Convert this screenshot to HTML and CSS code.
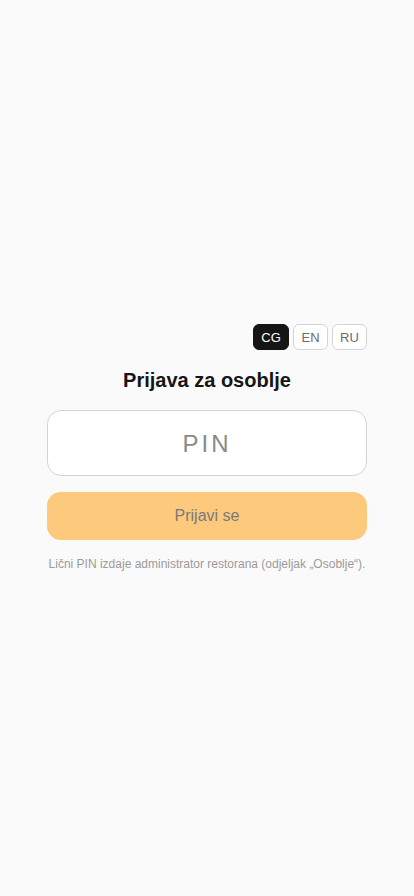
FILE: index.html
```html
<!DOCTYPE html>
<html lang="sr">
<head>
<meta charset="utf-8">
<meta name="viewport" content="width=device-width, initial-scale=1">
<title>Prijava za osoblje</title>
<link rel="stylesheet" href="styles.css">
</head>
<body>
<main class="page">
  <section class="card">
    <div class="langs">
      <button class="lang active">CG</button>
      <button class="lang">EN</button>
      <button class="lang">RU</button>
    </div>
    <h1 class="title">Prijava za osoblje</h1>
    <input class="pin" type="password" placeholder="PIN" inputmode="numeric">
    <button class="submit">Prijavi se</button>
    <p class="note">Lični PIN izdaje administrator restorana (odjeljak „Osoblje“).</p>
  </section>
</main>
</body>
</html>
```
FILE: styles.css
```css
* { box-sizing: border-box; }
html, body { margin: 0; padding: 0; }
body {
  background: #fafafa;
  font-family: "Liberation Sans", Arial, sans-serif;
  color: #111;
}
.page {
  min-height: 896px;
  display: flex;
  align-items: center;
  justify-content: center;
}
.card {
  width: 320px;
  display: flex;
  flex-direction: column;
}
.langs {
  display: flex;
  justify-content: flex-end;
  gap: 4px;
}
.lang {
  width: 35px;
  height: 26px;
  border: 1px solid #d4d4d4;
  border-radius: 6px;
  background: #fff;
  color: #6b6b6b;
  font-family: inherit;
  font-size: 13px;
  padding: 0;
}
.lang.active {
  width: 36px;
  background: #151515;
  border-color: #151515;
  color: #fff;
}
.title {
  margin: 16px 0 0;
  font-size: 20px;
  line-height: 28px;
  font-weight: 700;
  text-align: center;
  color: #151515;
}
.pin {
  margin-top: 16px;
  height: 66px;
  width: 100%;
  border: 1px solid #d4d4d4;
  border-radius: 14px;
  background: #fff;
  font-family: inherit;
  font-size: 24px;
  letter-spacing: 3px;
  text-align: center;
  padding-top: 3px;
  outline: none;
}
.pin::placeholder { color: #8a8a8a; }
.submit {
  margin-top: 16px;
  height: 48px;
  width: 100%;
  border: none;
  border-radius: 14px;
  background: #fdc97c;
  color: #7a7a7a;
  font-family: inherit;
  font-size: 16px;
}
.note {
  margin: 16px 0 0;
  font-size: 12px;
  line-height: 16px;
  color: #9a9a9a;
  text-align: center;
}
```
